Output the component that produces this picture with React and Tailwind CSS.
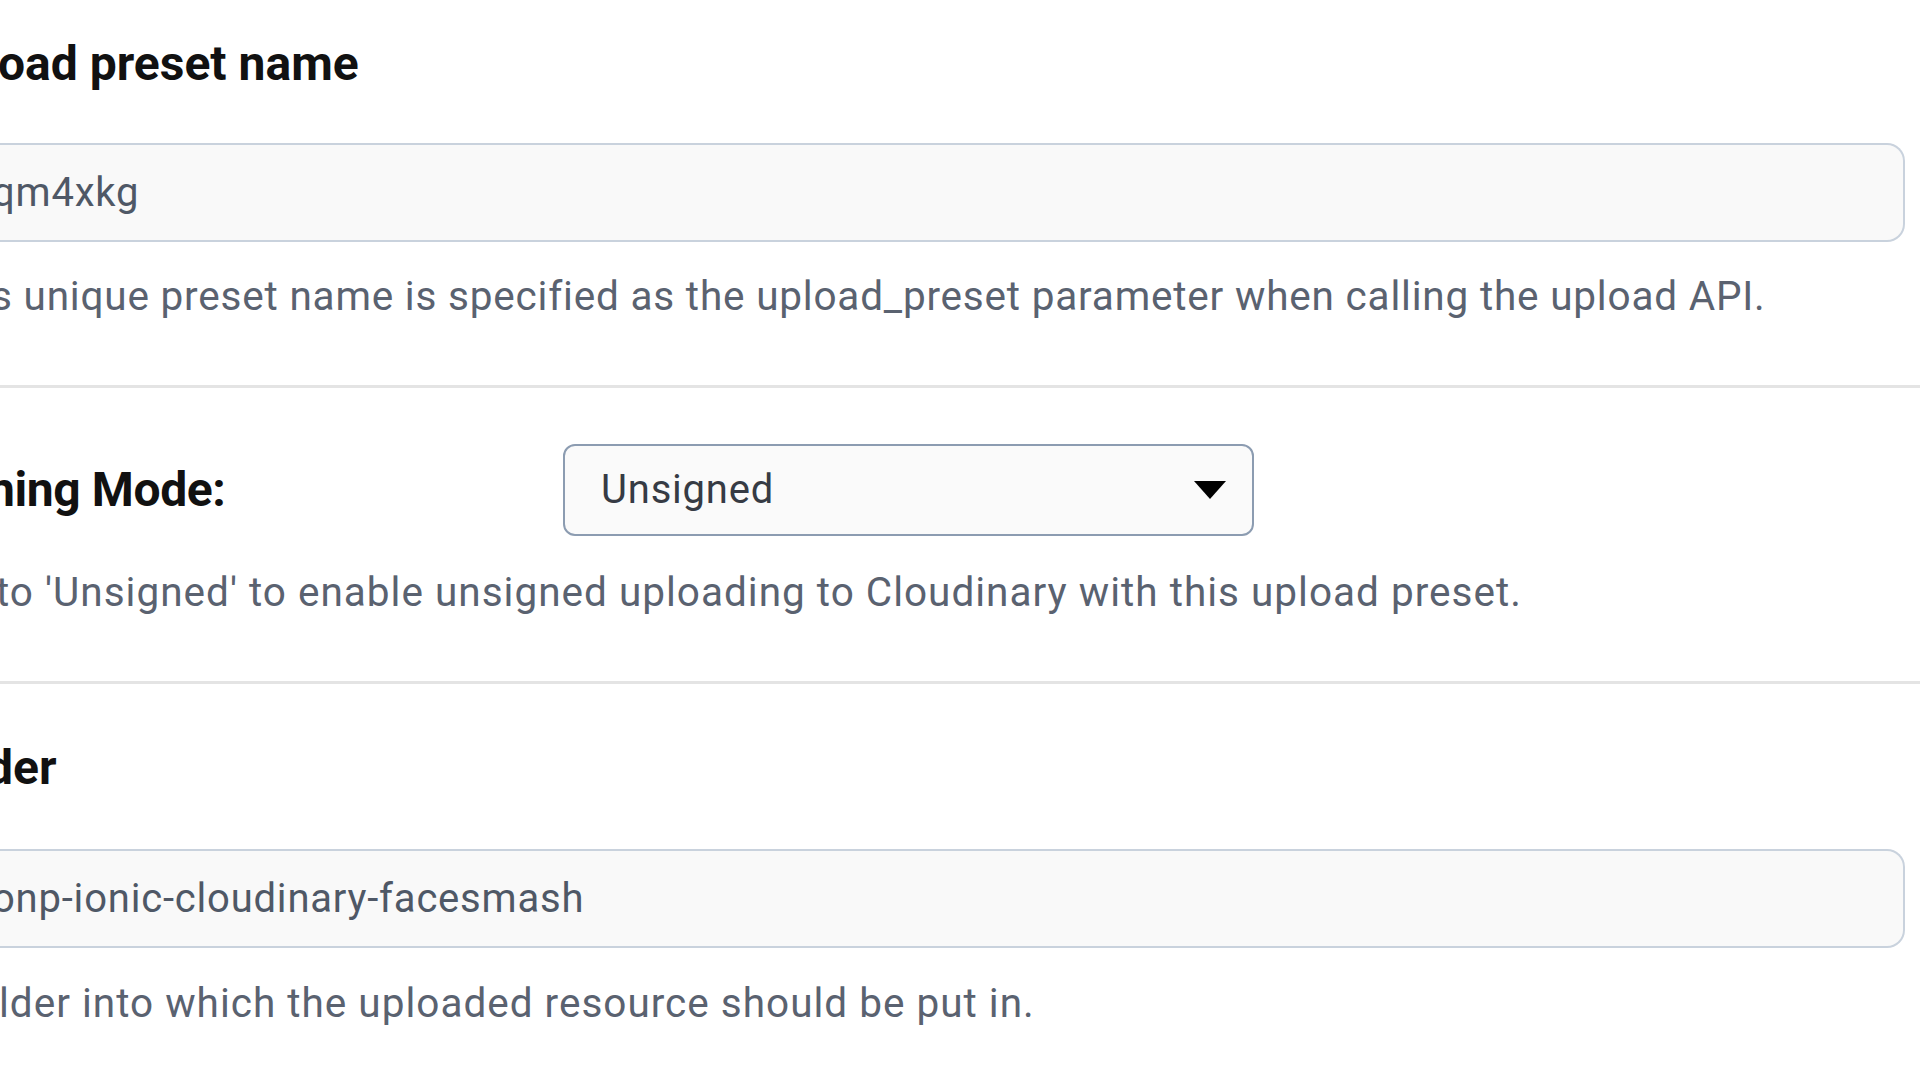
import React from "react";

const HelpText = ({ className = "", children }) => (
  <p className={`text-[40.5px] leading-[48px] text-[#5a6270] whitespace-nowrap ${className}`}>
    {children}
  </p>
);

const ReadOnlyField = ({ value, textClass = "" }) => (
  <div className="mr-[15px] h-[99px] rounded-r-[18px] border-2 border-l-0 border-[#c9d2dd] bg-[#f9f9f9] flex items-center overflow-hidden">
    <span className={`text-[40px] tracking-[0.8px] text-[#4f5866] whitespace-nowrap ${textClass}`}>{value}</span>
  </div>
);

const App = () => {
  return (
    <div className="w-[1920px] h-[1080px] overflow-hidden bg-white font-['Roboto',sans-serif]">
      {/* Upload preset name */}
      <section className="border-b-[3px] border-[#e4e4e4] pt-[36px] pb-[65px]">
        <h2 className="text-[48px] leading-[56px] font-bold text-[#111] whitespace-nowrap -ml-[2px]">
          oad preset name
        </h2>
        <div className="mt-[51px]">
          <ReadOnlyField value="qm4xkg" textClass="-ml-[8px]" />
        </div>
        <HelpText className="mt-[30px] -ml-[9px] tracking-[0.8px]">
          s unique preset name is specified as the upload_preset parameter when calling the upload API.
        </HelpText>
      </section>

      {/* Signing mode */}
      <section className="border-b-[3px] border-[#e4e4e4] pt-[56px] pb-[65px]">
        <div className="flex items-center h-[92px]">
          <div className="w-[563px] shrink-0">
            <span className="block text-[48px] font-bold tracking-[-0.4px] text-[#111] whitespace-nowrap -ml-[12px]">
              ning Mode:
            </span>
          </div>
          <div className="w-[691px] h-[92px] rounded-[12px] border-2 border-[#8c9cb1] bg-[#fafafa] flex items-center justify-between pl-[36px] pr-[26px]">
            <span className="text-[40px] tracking-[0.8px] text-[#363b44]">Unsigned</span>
            <svg width="32" height="18" viewBox="0 0 32 18">
              <polygon points="0,0 32,0 16,18" fill="#000" />
            </svg>
          </div>
        </div>
        <HelpText className="mt-[32px] -ml-[4px] tracking-[1px]">
          to 'Unsigned' to enable unsigned uploading to Cloudinary with this upload preset.
        </HelpText>
      </section>

      {/* Folder */}
      <section className="pt-[56px]">
        <h2 className="text-[48px] leading-[56px] font-bold text-[#111] whitespace-nowrap -ml-[14px]">
          der
        </h2>
        <div className="mt-[53px]">
          <ReadOnlyField value="onp-ionic-cloudinary-facesmash" textClass="-ml-[8px]" />
        </div>
        <HelpText className="mt-[31px] -ml-[1px] tracking-[1px]">
          lder into which the uploaded resource should be put in.
        </HelpText>
      </section>
    </div>
  );
};

export default App;
